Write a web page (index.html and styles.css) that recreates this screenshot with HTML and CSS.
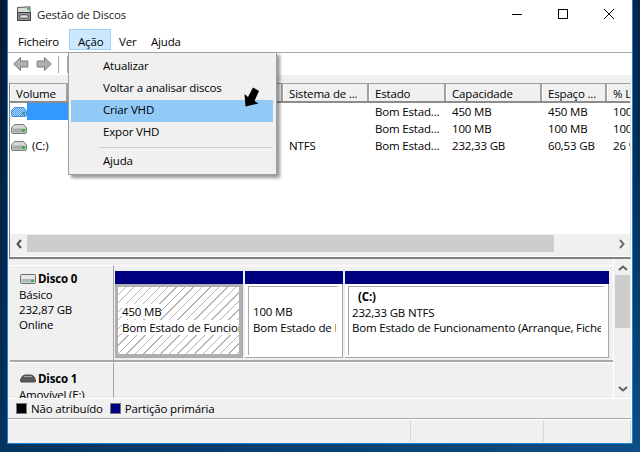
FILE: index.html
```html
<!DOCTYPE html>
<html lang="pt">
<head>
<meta charset="utf-8">
<title>Gestão de Discos</title>
<link rel="stylesheet" href="styles.css">
</head>
<body>
<svg class="defs" width="0" height="0" aria-hidden="true">
  <defs>
    <pattern id="dither" width="2" height="2" patternUnits="userSpaceOnUse">
      <rect width="2" height="2" fill="#3399ff"/>
      <rect width="1" height="1" fill="#c8d8e8"/>
      <rect x="1" y="1" width="1" height="1" fill="#c8d8e8"/>
    </pattern>
  </defs>
  <symbol id="disk" viewBox="0 0 16 10">
    <path d="M4 .5h8q1 0 1.500 1L15.500 4v4q0 1.500-1.500 1.500H2Q.5 9.500.5 8V4l2-2.500Q3 .5 4 .5z" fill="#d4d8d8" stroke="#777b7b"/>
    <rect x="1.500" y="4.500" width="13" height="4" fill="#a8acac"/>
    <rect x="11" y="5" width="3" height="3" fill="#3fae49"/>
  </symbol>
  <symbol id="disk-sel" viewBox="0 0 16 10">
    <path d="M4 .5h8q1 0 1.500 1L15.500 4v4q0 1.500-1.500 1.500H2Q.5 9.500.5 8V4l2-2.500Q3 .5 4 .5z" fill="url(#dither)" stroke="#3f8fdf"/>
    <rect x="11" y="5" width="3" height="3" fill="#3f9fa9"/>
  </symbol>
  <symbol id="hdd" viewBox="0 0 16 10">
    <rect x=".5" y=".5" width="15" height="9" rx="1" fill="#e6e8e8" stroke="#6a6e6e"/>
    <rect x="1.500" y="5" width="13" height="3.500" fill="#b4b8b8"/>
    <rect x="11" y="5.500" width="3" height="2.500" fill="#3fae49"/>
  </symbol>
  <symbol id="removable" viewBox="0 0 16 10">
    <path d="M.5 7V6Q2 1 5 1h6q3 0 4.500 5v1q0 1-1 1h-13q-1 0-1-1z" fill="#5a5a5a" stroke="#4a4a4a"/>
    <path d="M4 2.500h8" stroke="#a0a0a0"/>
  </symbol>
  <symbol id="nav" viewBox="0 0 16 14">
    <path d="M7.500.5L.7 7l6.800 6.500V10h7.300V4H7.500z" fill="#b0b0b0" stroke="#7a7a7a"/>
  </symbol>
</svg>
<div class="window">
  <header class="titlebar">
    <svg class="appicon" width="16" height="16" viewBox="0 0 16 16">
      <path d="M1.500 1.500L14 .8v5.700H1.500z" fill="#d8dcdc" stroke="#555"/>
      <rect x="11" y="2" width="2" height="2" fill="#4cba4c"/>
      <rect x="1.500" y="6.500" width="13" height="8" fill="#8b9090" stroke="#444"/>
      <rect x="4" y="9" width="8" height="3" fill="#e4e4e4" stroke="#333" stroke-width=".6"/>
    </svg>
    <span class="title">Gestão de Discos</span>
    <div class="controls">
      <svg width="12" height="12" viewBox="0 0 12 12"><path d="M1 6.500h10" stroke="#000"/></svg>
      <svg width="12" height="12" viewBox="0 0 12 12"><rect x="1.500" y="1.500" width="9" height="9" fill="none" stroke="#000"/></svg>
      <svg width="12" height="12" viewBox="0 0 12 12"><path d="M1 1l10 10M11 1L1 11" stroke="#000" fill="none"/></svg>
    </div>
  </header>
  <nav class="menubar">
    <span class="menu-item m-ficheiro">Ficheiro</span>
    <span class="menu-item m-acao">Ação</span>
    <span class="menu-item m-ver">Ver</span>
    <span class="menu-item m-ajuda">Ajuda</span>
  </nav>
  <div class="toolbar">
    <svg class="nav-icon" width="16" height="14"><use href="#nav"/></svg>
    <svg class="nav-icon flip" width="16" height="14"><use href="#nav"/></svg>
    <i class="tsep"></i>
    <i class="tsep"></i>
  </div>
  <div class="band"></div>
  <section class="list">
    <div class="row head">
      <span class="h">Volume</span><span class="h"></span><span class="h"></span><span class="h">Sistema de ...</span><span class="h">Estado</span><span class="h">Capacidade</span><span class="h">Espaço ...</span><span class="h">% L</span>
    </div>
    <div class="row">
      <span class="c vol"><svg width="16" height="10"><use href="#disk-sel"/></svg><b class="sel"></b></span><span class="c"></span><span class="c"></span><span class="c"></span><span class="c">Bom Estad...</span><span class="c">450 MB</span><span class="c">450 MB</span><span class="c">100 %</span>
    </div>
    <div class="row">
      <span class="c vol"><svg width="16" height="10"><use href="#disk"/></svg></span><span class="c"></span><span class="c"></span><span class="c"></span><span class="c">Bom Estad...</span><span class="c">100 MB</span><span class="c">100 MB</span><span class="c">100 %</span>
    </div>
    <div class="row">
      <span class="c vol"><svg width="16" height="10"><use href="#disk"/></svg><span class="vname">(C:)</span></span><span class="c"></span><span class="c"></span><span class="c">NTFS</span><span class="c">Bom Estad...</span><span class="c">232,33 GB</span><span class="c">60,53 GB</span><span class="c">26 %</span>
    </div>
    <div class="hscroll">
      <span class="arrow"><svg width="6" height="10" viewBox="0 0 6 10"><path d="M5 1L1.500 5 5 9" fill="none" stroke="#505050" stroke-width="2"/></svg></span>
      <div class="htrack"><div class="hthumb"></div></div>
      <span class="arrow"><svg width="6" height="10" viewBox="0 0 6 10"><path d="M1 1l3.500 4L1 9" fill="none" stroke="#707070" stroke-width="2"/></svg></span>
    </div>
  </section>
  <section class="lower">
    <div class="disks">
      <div class="disk d0">
        <div class="dlabel">
          <div class="dname"><svg width="16" height="10"><use href="#hdd"/></svg>Disco 0</div>
          <div>Básico</div>
          <div>232,87 GB</div>
          <div>Online</div>
        </div>
        <div class="parts">
          <div class="part p1"><div class="pbar"></div><div class="pbody hatch"><span>450 MB</span><br><span>Bom Estado de Funcionamento</span></div></div>
          <div class="part p2"><div class="pbar"></div><div class="pbody"><span>100 MB</span><br><span>Bom Estado de Funcionamento</span></div></div>
          <div class="part p3"><div class="pbar"></div><div class="pbody"><strong class="pc">(C:)</strong><br><span>232,33 GB NTFS</span><br><span>Bom Estado de Funcionamento (Arranque, Ficheiro de paginação)</span></div></div>
        </div>
      </div>
      <div class="disk d1">
        <div class="dlabel">
          <div class="dname"><svg width="16" height="10"><use href="#removable"/></svg>Disco 1</div>
          <div>Amovível (E:)</div>
        </div>
        <div class="parts"></div>
      </div>
    </div>
    <div class="vscroll">
      <svg width="10" height="6" viewBox="0 0 10 6"><path d="M1 5l4-3.500L9 5" fill="none" stroke="#606060" stroke-width="2"/></svg>
      <div class="vtrack"><div class="vthumb"></div></div>
      <svg width="10" height="6" viewBox="0 0 10 6"><path d="M1 1l4 3.500L9 1" fill="none" stroke="#606060" stroke-width="2"/></svg>
    </div>
  </section>
  <div class="legend">
    <i class="sw black"></i><span>Não atribuído</span>
    <i class="sw navy"></i><span>Partição primária</span>
  </div>
  <footer class="status"><i></i><i></i><i></i></footer>
</div>
<div class="popup">
  <div class="pi">Atualizar</div>
  <div class="pi">Voltar a analisar discos</div>
  <div class="pi on">Criar VHD</div>
  <div class="pi">Expor VHD</div>
  <div class="psep"></div>
  <div class="pi">Ajuda</div>
</div>
<svg class="cursor" width="18" height="22" viewBox="0 0 18 22"><path d="M1.500 20.500L.5 8l3.500 3L9 1.500 15 5l-4.500 10 4 2.500z" fill="#000"/></svg>
</body>
</html>
```
FILE: styles.css
```css
* { box-sizing: border-box; }
html, body { margin: 0; padding: 0; }
body {
  width: 640px; height: 452px; overflow: hidden; position: relative;
  background: linear-gradient(160deg, #011a33 0%, #02305a 60%, #0d4f86 100%);
  font: 11.5px/15px "Open Sans", "Noto Sans", sans-serif;
  letter-spacing: -.17px;
  color: #000;
  padding-left: 7px;
}
.defs { position: absolute; }
svg { display: block; flex: none; }

.window {
  width: 626px; height: 444px; background: #fff;
  border: 1px solid #1883d7; border-top: 0;
  display: flex; flex-direction: column;
}

.titlebar { height: 29px; display: flex; align-items: center; padding-left: 8px; flex: none; }
.appicon { margin-top: -1px; }
.title { margin-left: 5px; color: #222; margin-top: -1px; }
.controls { margin-left: auto; display: flex; gap: 34px; padding-right: 17px; margin-top: -2px; }

.menubar {
  height: 24px; flex: none; border-bottom: 1px solid #a8a8a8;
  display: flex; padding-left: 2px; align-items: stretch;
}
.menu-item { padding: 2px 8px 0; margin-bottom: 2px; line-height: 19px; border: 1px solid transparent; border-width: 1px 0 1px 0; }
.m-ficheiro { width: 59px; }
.m-acao { width: 42px; background: #cce8ff; border: 1px solid #99d1ff; padding-left: 8px; }
.m-ver { width: 32px; }

.toolbar { height: 22px; flex: none; display: flex; align-items: center; padding-left: 5px; }
.nav-icon { margin-right: 7px; }
.flip { transform: scaleX(-1); }
.tsep { width: 1px; height: 17px; background: #a8a8a8; margin-right: 8px; }
.toolbar .flip { margin-right: 6px; }

.band { height: 8px; background: #f0f0f0; flex: none; }

.list {
  height: 176px; flex: none; margin-left: 1px; margin-right: 1px;
  border-left: 1px solid #808080; border-right: 1px solid #e0e0e0;
  border-bottom: 2px solid #808080;
  display: flex; flex-direction: column; overflow: hidden;
}
.row {
  display: grid; flex: none; height: 17px;
  grid-template-columns: 58px 100px 115px 86px 77px 96px 65px 30px;
  line-height: 17px; white-space: nowrap;
}
.head { height: 20px; background: #fff; border-top: 1px solid #a0a0a0; border-bottom: 2px solid #8c8c8c; }
.h {
  background: #f0f0f0; border-left: 1px solid #fff; border-right: 2px solid #a0a0a0;
  padding: 1px 0 0 5px; overflow: hidden; line-height: 17px;
}
.c { padding-left: 6px; overflow: hidden; }
.vol { padding-left: 1px; display: flex; align-items: center; overflow: visible; position: relative; }
.sel { position: absolute; left: 17px; top: 0; width: 60px; height: 17px; background: #3399ff; }
.vname { margin-left: 5px; }

.hscroll {
  margin-top: auto; height: 23px; background: #f0f0f0; display: flex;
  border-bottom: 1px solid #fff; padding: 1px 0 4px; align-items: stretch; flex: none;
}
.arrow { width: 17px; display: flex; align-items: center; justify-content: center; flex: none; }
.htrack { flex: 1; }
.hthumb { width: 527px; height: 100%; background: #cdcdcd; }

.lower { height: 139px; flex: none; display: flex; background: #f0f0f0; margin-right: 1px; }
.disks { flex: 1; padding-top: 6px; min-width: 0; overflow: hidden; margin-left: 2px; }
.disk { display: flex; }
.d0 { height: 97px; border-bottom: 2px solid #a8a8a8; }
.d1 { height: 38px; overflow: hidden; }
.dlabel { width: 104px; flex: none; padding: 5px 0 0 9px; border-right: 1px solid #a8a8a8; border-top: 1px solid #fff; }
.d1 .dlabel { padding-top: 8px; }
.dname { display: flex; align-items: center; font-weight: 700; color: #000; line-height: 16px; padding-left: 1px; }
.dname svg { margin-right: 2px; }
.parts { flex: 1; display: flex; gap: 2px; padding: 5px 0 0 1px; min-width: 0; border-top: 1px solid #fff; }
.part { display: flex; flex-direction: column; height: 87px; background: #fff; flex: none; border-right: 1px solid #a8a8a8; border-bottom: 1px solid #a8a8a8; }
.p1 { width: 128px; }
.p2 { width: 98px; }
.p3 { width: 264px; }
.pbar { height: 13px; background: #000080; flex: none; margin-right: -1px; }
.pbody {
  flex: 1; margin: 2px 2px 2px 3px; padding: 17px 0 0 4px;
  border-style: solid; border-color: #a8a8a8 #fff #fff #a8a8a8; border-width: 1px 4px 0 1px;
  overflow: hidden; white-space: nowrap;
  background: #fff; line-height: 15.5px;
}
.p3 .pbody { padding: 2px 0 0 3px; border-right-width: 5px; }
.pc { padding-left: 6px; font-weight: 700; }
.hatch {
  margin: 0; padding: 17px 0 0 4px; border: 3px solid #b0b0b0; border-right-width: 3px;
  background: repeating-linear-gradient(135deg, #fff 0 5px, #b4b4b4 5px 6px);
}
.hatch span { background: #fff; }

.vscroll {
  width: 18px; flex: none; display: flex; flex-direction: column; align-items: center;
  padding: 6px 0 6px; gap: 4px; border-left: 1px solid #fff;
}
.vtrack { flex: 1; width: 100%; }
.vthumb { height: 53px; margin: 0 1px 0 1px; background: #cdcdcd; }

.legend {
  height: 21px; flex: none; display: flex; align-items: center; background: #f0f0f0;
  border-top: 1px solid #fff; border-bottom: 1px solid #a8a8a8; padding-left: 8px; margin-right: 1px;
}
.sw { width: 11px; height: 11px; border: 1px solid #777; margin-right: 4px; }
.black { background: #000; }
.navy { background: #000080; margin-left: 7px; }

.status { flex: 1; background: #f0f0f0; border-top: 1px solid #fff; display: flex; justify-content: flex-start; padding: 1px 0 1px 0; }
.status i { border-right: 1px solid #d8d8d8; }
.status i:nth-child(1) { width: 403px; }
.status i:nth-child(2) { width: 133px; }
.status i:nth-child(3) { width: 87px; }

.popup {
  position: absolute; left: 68px; top: 52px; width: 209px; height: 123px;
  background: #f0f0f0; border: 1px solid #a0a0a0; padding: 3px 3px 3px 2px;
  box-shadow: 3px 3px 3px rgba(0,0,0,.4);
}
.pi { height: 22px; line-height: 20px; padding-left: 32px; }
.on { background: #91c9f7; }
.psep { height: 7px; margin-left: 28px; background: linear-gradient(#d0d0d0,#d0d0d0) no-repeat 0 3px / 100% 1px; }
.cursor { position: absolute; left: 244px; top: 86px; }
```
